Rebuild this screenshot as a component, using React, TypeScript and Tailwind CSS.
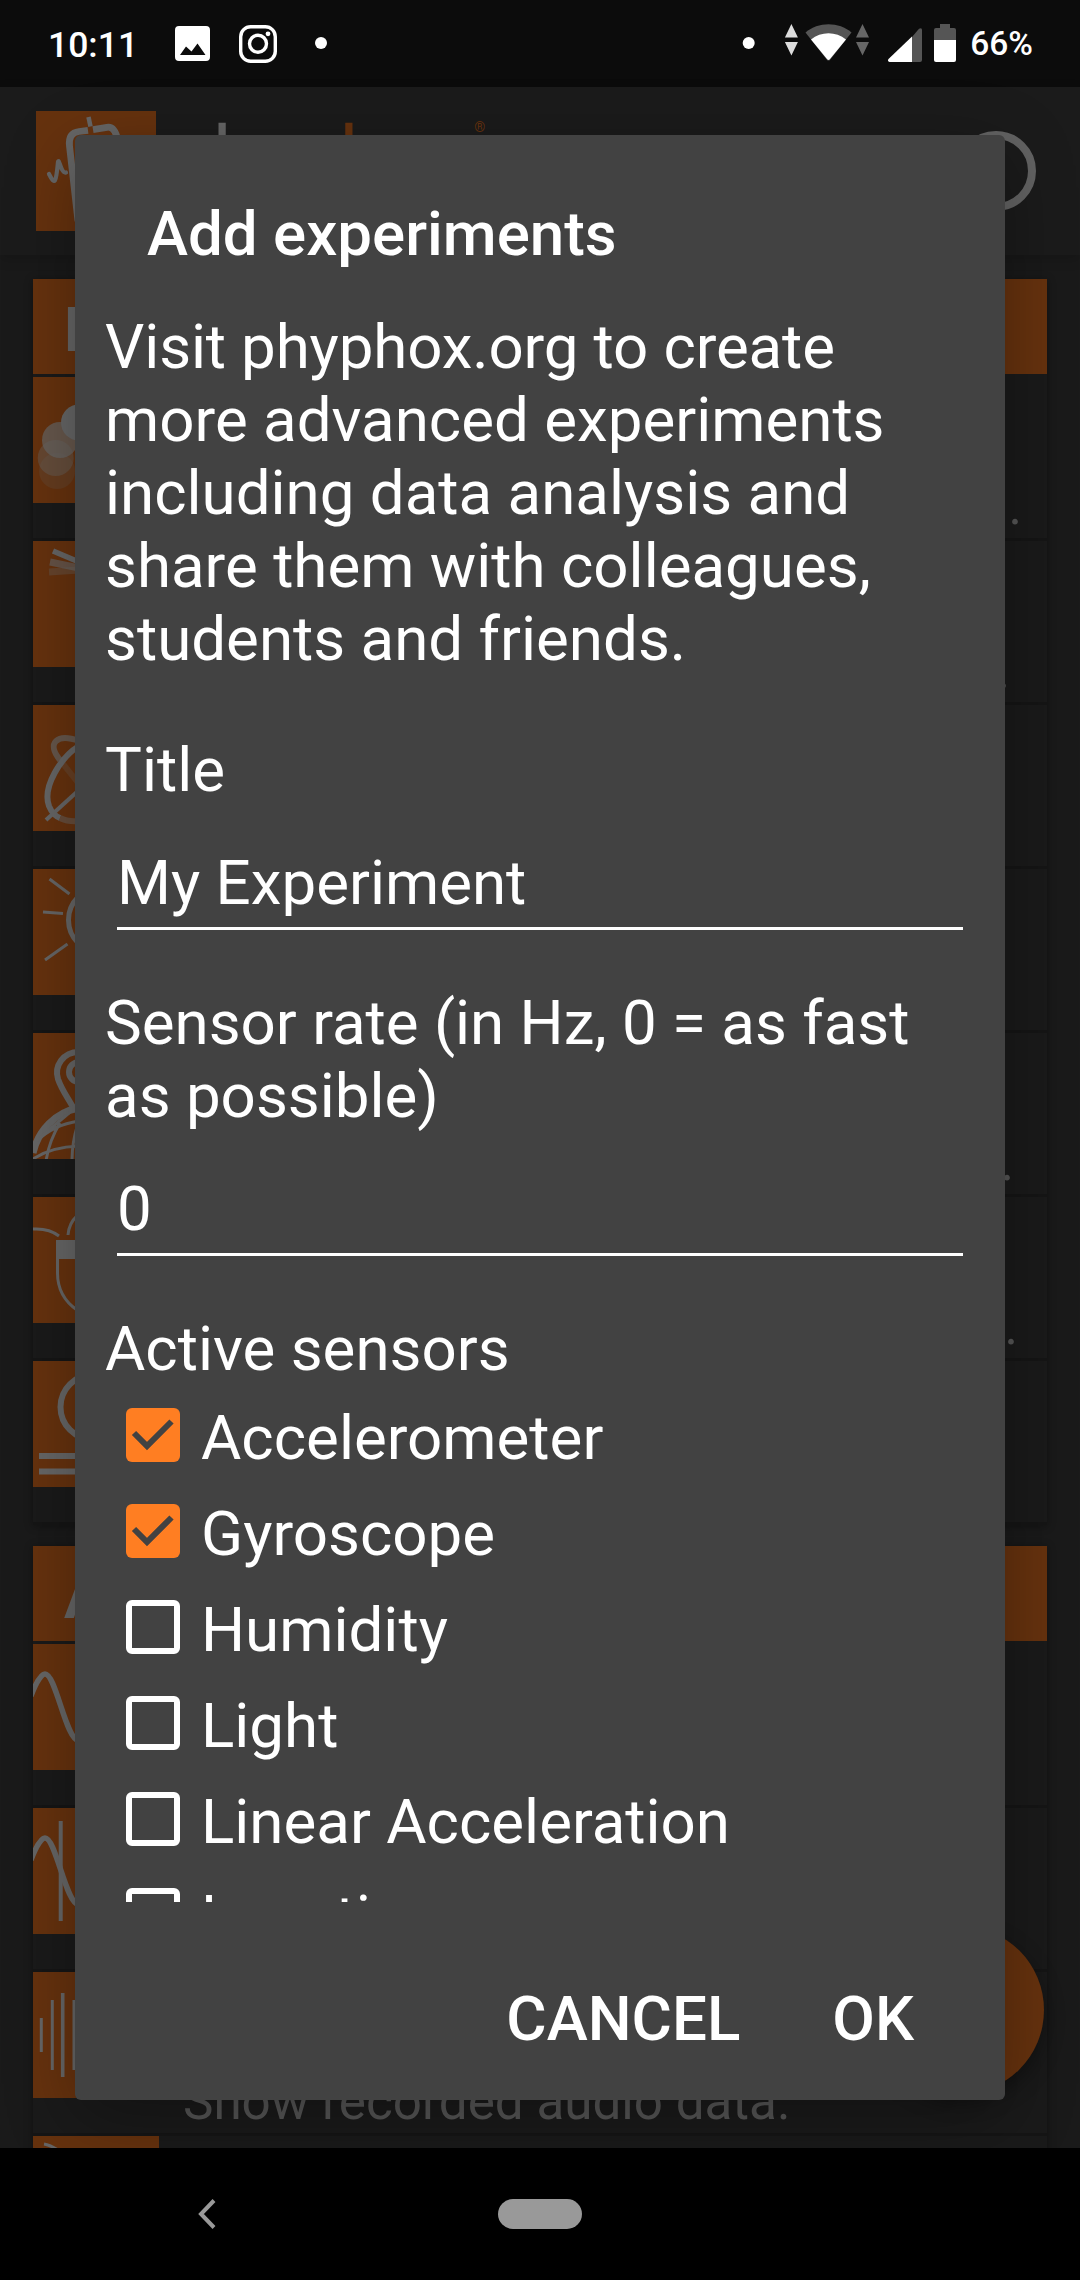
import type { ReactNode } from "react";

function StatusBar() {
  return (
    <header className="flex h-[87px] shrink-0 items-start justify-between bg-[#0c0c0c] pl-[48px] pr-[47px] text-white">
      <div className="flex items-start">
        <span className="mt-[24px] w-[127px] text-[35.500px] leading-[42px] font-medium">10:11</span>
        <svg className="mt-[26px] h-[35px] w-[35px]" viewBox="0 0 35 35">
          <path
            fill="#fff"
            fillRule="evenodd"
            d="M4 0h27a4 4 0 0 1 4 4v27a4 4 0 0 1-4 4H4a4 4 0 0 1-4-4V4a4 4 0 0 1 4-4ZM5 29h25.500L22.500 17.500 16.500 25.500 11 20.500Z"
          />
        </svg>
        <svg className="mt-[25px] ml-[29px] h-[38px] w-[38px]" viewBox="0 0 38 38" fill="none" stroke="#fff">
          <rect x="1.700" y="1.700" width="34.600" height="34.600" rx="10" strokeWidth="3.400" />
          <circle cx="19" cy="18.700" r="8.500" strokeWidth="3.400" />
          <circle cx="29" cy="8.800" r="2.400" fill="#fff" stroke="none" />
        </svg>
        <span className="mt-[37px] ml-[38px] h-[12px] w-[12px] rounded-full bg-white" />
      </div>
      <div className="flex items-start">
        <svg className="mt-[20px] h-[46px] w-[218px]" viewBox="742 20 218 46">
          <circle cx="748.700" cy="43" r="6" fill="#fff" />
          <path d="M791.400 24l6.500 13.500h-13zM784.900 42h13l-6.500 13.500z" fill="#ddd" />
          <path d="M862.500 24l6.500 13.500h-13zM856 42h13l-6.500 13.500z" fill="#666" />
          <path d="M805.500 32.500C818 21.500 839 21.500 851.500 32.500L829.500 60.500h-2z" fill="#555" />
          <path d="M811 39.500C821 31 836 31 846 39.500L829.800 59.200q-1.300 1.600-2.600 0z" fill="#fff" />
          <path d="M922 30v30a2 2 0 0 1-2 2h-8V37l7-8.200q3-1.800 3 1.200z" fill="#555" />
          <path d="M912 36.500V62H889.500q-2.500-1-1-3z" fill="#fff" />
          <path d="M940 24h10v4h4a2 2 0 0 1 2 2v10h-22V30a2 2 0 0 1 2-2h4z" fill="#555" />
          <path d="M934 40h22v20a2 2 0 0 1-2 2h-18a2 2 0 0 1-2-2z" fill="#fff" />
        </svg>
        <span className="mt-[24px] ml-[10px] text-[33.500px] leading-[40px] font-medium">66%</span>
      </div>
    </header>
  );
}

function AppHeader() {
  return (
    <div className="flex h-[168px] shrink-0 items-start bg-[#1b1b1b] pt-[24px] pl-[36px] pr-[44px] shadow-[0_4px_12px_rgba(0,0,0,0.15)]">
      <svg className="h-[120px] w-[120px] bg-[#66320e]" viewBox="0 0 120 120" fill="none" stroke="#666">
        <path d="M42 110L33.500 35Q32 22 43 20.500L52 19.300M57 18.600L71 16.300Q79 15 82 30" strokeWidth="6.800" />
        <path d="M52.500 6L54.500 15.500" strokeWidth="4.500" />
        <path d="M13 63C19 75 20 72 22 51C23 46 25 63 30 61.500" strokeWidth="4.200" strokeLinecap="round" />
      </svg>
      <div className="mt-[-2px] ml-[12px] flex text-[80px] leading-[94px] text-[#666]">
        <span>phyp</span>
        <span className="text-[#66320e]">hox</span>
        <span className="mt-[9px] ml-[6px] text-[14px] leading-[18px] text-[#66320e]">®</span>
      </div>
      <div className="mt-[20px] ml-auto h-[80px] w-[80px] rounded-full border-[8px] border-[#636363]" />
    </div>
  );
}

const sine = "M-2 52C4 36 9 30 12 30C23 30 33 97 46 97";

const sensorIcons: ReactNode[] = [
  <g fill="#666" key="a">
    <circle cx="24" cy="94" r="18" opacity=".2" />
    <circle cx="22.700" cy="81" r="18" opacity=".4" />
    <circle cx="27" cy="63" r="18" opacity=".7" />
    <circle cx="46" cy="45.500" r="18" />
  </g>,
  <g stroke="#666" key="b">
    <path d="M16 31L46 29" strokeWidth="7" opacity=".35" />
    <path d="M17 21L46 27" strokeWidth="7" opacity=".65" />
    <path d="M20 10L46 21" strokeWidth="5.500" />
  </g>,
  <g stroke="#666" fill="none" key="c">
    <path d="M46 36C24 28 13 38 27 55" strokeWidth="6" opacity=".7" />
    <path d="M27 55L46 79" strokeWidth="6" opacity=".25" />
    <path d="M46 41C28 52 9 82 16 101C18 106 22 111 27 113" strokeWidth="6" />
    <path d="M27 113Q35 117 46 116" strokeWidth="6" opacity=".5" />
    <path d="M13 115L46 85" strokeWidth="4" />
  </g>,
  <g stroke="#666" fill="none" strokeWidth="3" key="d">
    <circle cx="68" cy="51" r="32.500" strokeWidth="5" />
    <path d="M16.500 10L36.500 25M10 43L30 44.500M34.500 75L12 91" />
  </g>,
  <g stroke="#666" fill="none" key="e">
    <path d="M46 19C30 19 21 33 25 46C29 58 36 66 42 78" strokeWidth="6" />
    <circle cx="46" cy="39" r="10" strokeWidth="6" />
    <path d="M0 120C5 98 22 79 46 75" strokeWidth="7" />
    <path d="M0 126Q18 114 46 113M13 128Q16 108 27 90M39 128Q39 110 44 94M4 108Q20 92 46 88M10 102L36 80" strokeWidth="3" />
  </g>,
  <g stroke="#666" fill="none" strokeWidth="3" key="f">
    <path d="M0 32Q16 31 26 39M35 38Q36 26 44 19M24.500 43V76C24.500 92 31 104 44 113" />
    <path d="M23 43h23v19H23z" fill="#666" stroke="none" />
  </g>,
  <g stroke="#666" fill="none" key="g">
    <circle cx="60" cy="46" r="32.500" strokeWidth="6" />
    <path d="M6 95H50M6 110.500H50" strokeWidth="6" />
  </g>,
];

const audioIcons: ReactNode[] = [
  <path d={sine} stroke="#666" fill="none" strokeWidth="5.500" key="a" />,
  <g stroke="#666" fill="none" key="b">
    <path d={sine} strokeWidth="5.500" />
    <path d="M27.700 13V113" strokeWidth="4" />
  </g>,
  <g stroke="#666" key="c">
    <path d="M8.300 46V80M19.300 28V98M41 28V98" strokeWidth="3" />
    <path d="M29.700 21V105" strokeWidth="3.600" />
  </g>,
  <path d="M11 8Q17 9 25 14" stroke="#666" fill="none" strokeWidth="3" key="d" />,
];

const sensorEllipses = ["pr-[25px]", "pr-[37px]", "", "", "pr-[33px]", "pr-[29px]", ""];

function Row({ icon, children }: { icon: ReactNode; children?: ReactNode }) {
  return (
    <div className="flex h-[164px] shrink-0 items-start border-b-[3px] border-[#151515]">
      <svg className="h-[126px] w-[126px] shrink-0 bg-[#66320e]" viewBox="0 0 126 126">
        {icon}
      </svg>
      <div className="flex min-w-0 flex-1 items-end self-stretch pl-[24px] text-[51.200px] leading-[62px] text-[#555]">
        {children}
      </div>
    </div>
  );
}

function Section({ title, children }: { title: string; children: ReactNode }) {
  return (
    <section className="mx-[33px] bg-[#1a1a1a] shadow-[0_1px_8px_rgba(0,0,0,0.35)]">
      <h2 className="h-[95px] bg-[#66320e] pt-[14px] pl-[31px] text-[62px] leading-[73px] font-bold text-[#666]">
        {title}
      </h2>
      <div className="flex flex-col pt-[3px]">{children}</div>
    </section>
  );
}

function ExperimentList() {
  return (
    <main className="relative flex min-h-0 flex-1 flex-col gap-[21px] overflow-hidden pt-[24px]">
      <Section title="Raw Sensors">
        {sensorIcons.map((icon, i) => (
          <Row icon={icon} key={i}>
            {sensorEllipses[i] && (
              <span className={"ml-auto " + sensorEllipses[i]}>...</span>
            )}
          </Row>
        ))}
      </Section>
      <Section title="Acoustics">
        {audioIcons.map((icon, i) => (
          <Row icon={icon} key={i}>
            {i === 2 && <span>Show recorded audio data.</span>}
          </Row>
        ))}
      </Section>
      <div className="absolute right-[36px] bottom-[54px] h-[168px] w-[168px] rounded-full bg-[#66320e] shadow-[0_8px_20px_rgba(0,0,0,0.35)]" />
    </main>
  );
}

function Checkbox({ label, checked }: { label: string; checked?: boolean }) {
  return (
    <div className="flex h-[96px] shrink-0 items-start pl-[21px]">
      {checked ? (
        <svg className="mt-[7px] h-[54px] w-[54px] rounded-[6px] bg-[#ff7e22]" viewBox="0 0 54 54">
          <path d="M8 25L21 38L45.500 13.500" fill="none" stroke="#424242" strokeWidth="6" />
        </svg>
      ) : (
        <div className="mt-[7px] h-[54px] w-[54px] rounded-[6px] border-[6px] border-white" />
      )}
      <span className="mt-px ml-[21px]">{label}</span>
    </div>
  );
}

function Dialog() {
  return (
    <div className="absolute top-[135px] left-[75px] flex h-[1965px] w-[930px] flex-col rounded-[6px] bg-[#424242] text-[61.850px] leading-[73px] whitespace-nowrap text-white shadow-[0_18px_70px_rgba(0,0,0,0.3)]">
      <h1 className="mt-[63px] pl-[72px] font-medium">Add experiments</h1>
      <div className="mt-[39px] flex h-[1592px] flex-col overflow-hidden pt-px pl-[30px]">
        <p className="shrink-0">
          <span className="tracking-[-0.140px]">Visit phyphox.org to create</span>
          <br />
          more advanced experiments
          <br />
          including data analysis and
          <br />
          share them with colleagues,
          <br />
          students and friends.
        </p>
        <label className="mt-[58px] shrink-0">Title</label>
        <div className="mt-[40px] mr-[42px] ml-[12px] h-[83px] shrink-0 border-b-[3px] border-white">My Experiment</div>
        <label className="mt-[57px] shrink-0">
          Sensor rate (in Hz, 0 = as fast
          <br />
          as possible)
        </label>
        <div className="mt-[40px] mr-[42px] ml-[12px] h-[83px] shrink-0 border-b-[3px] border-white">0</div>
        <h2 className="mt-[57px] mb-[15px] shrink-0">Active sensors</h2>
        <Checkbox label="Accelerometer" checked />
        <Checkbox label="Gyroscope" checked />
        <Checkbox label="Humidity" />
        <Checkbox label="Light" />
        <Checkbox label="Linear Acceleration" />
        <Checkbox label="Location" />
      </div>
      <div className="mt-[81px] flex justify-end gap-[92px] pr-[91px] font-medium">
        <span>CANCEL</span>
        <span>OK</span>
      </div>
    </div>
  );
}

function NavBar() {
  return (
    <nav className="flex h-[132px] shrink-0 items-start bg-black pt-[51px] pl-[198px]">
      <svg className="h-[30px] w-[18px]" viewBox="0 0 18 30">
        <path d="M16 1.500L3 15L16 28.500" fill="none" stroke="#999" strokeWidth="4" />
      </svg>
      <span className="ml-[282px] h-[30px] w-[84px] rounded-full bg-[#999]" />
    </nav>
  );
}

export default function App() {
  return (
    <div className="relative flex h-[2280px] w-[1080px] flex-col overflow-hidden bg-[#1a1a1a] font-['Roboto',sans-serif]">
      <StatusBar />
      <AppHeader />
      <ExperimentList />
      <NavBar />
      <Dialog />
    </div>
  );
}
